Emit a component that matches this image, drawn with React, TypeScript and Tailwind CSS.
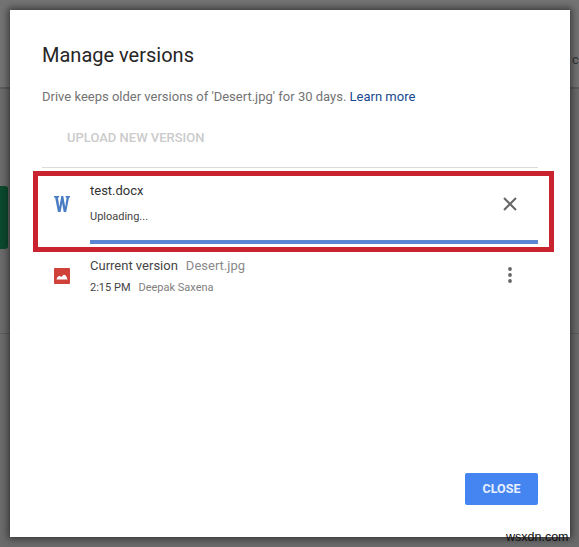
export default function App() {
  return (
    <div className="relative h-[547px] w-[579px] overflow-hidden bg-[#6b6b6b] pl-[10px] pt-[10px] font-['Roboto',sans-serif]">
      {/* dimmed page behind the dialog */}
      <div className="absolute left-0 top-0 h-[87px] w-full bg-[#737373]" />
      <div className="absolute left-0 top-[87px] h-[2px] w-full bg-[#5c5c5c]" />
      <div className="absolute left-0 top-[333px] h-[1px] w-full bg-[#5c5c5c]" />
      <div className="absolute left-[-6px] top-[186px] h-[63px] w-[14px] rounded-[3px] bg-[#0b4a2c]" />
      <span className="absolute left-[572px] top-[50px] text-[13px] text-[#333]">c</span>

      <div className="relative flex h-[527px] w-[560px] flex-col bg-white pl-[32px] pr-[32px] shadow-[0_0_7px_2px_rgba(0,0,0,0.5)]">
        <h1 className="mt-[31px] text-[20px] font-normal leading-[28px] text-[#262626]">Manage versions</h1>
        <p className="mt-[19px] text-[13px] leading-[18px] text-[#737373]">
          Drive keeps older versions of 'Desert.jpg' for 30 days.{" "}
          <span className="text-[#15478f]">Learn more</span>
        </p>
        <div className="mt-[23px] pl-[25px] text-[13px] font-medium leading-[18px] text-[#cbcbcb]">UPLOAD NEW VERSION</div>
        <div className="mt-[20px] h-px w-[496px] bg-[#dcdcdc]" />

        {/* highlighted row */}
        <div className="relative ml-[-9px] mt-[3px] flex h-[81px] w-[521px] border-[5px] border-[#c8232f] pl-[16px]">
          <div className="w-[36px] shrink-0 pt-[19px]">
            <svg width="16" height="18" viewBox="0 0 16 18" fill="#4a7cc4">
              <path d="M0 1h5.2v1.6H3.9L5.4 12 7.3 1h2l1.9 11L12.6 2.6h-1V1H16v1.6h-1L12.2 17H9.7L8.2 8.2 6.6 17H4L1.1 2.6H0z" />
            </svg>
          </div>
          <div className="flex-1">
            <div className="mt-[6px] text-[13px] leading-[18px] text-[#333]">test.docx</div>
            <div className="mt-[9px] text-[11px] leading-[16px] text-[#444]">Uploading...</div>
          </div>
          <svg className="absolute left-[463px] top-[19px]" width="18" height="18" viewBox="0 0 18 18" fill="none" stroke="#666" strokeWidth="2">
            <path d="M3 3l12 12M15 3L3 15" />
          </svg>
          <div className="absolute bottom-[3px] left-[52px] h-[4px] w-[448px] bg-[#5b86d1]" />
        </div>

        {/* current version row */}
        <div className="flex">
          <div className="w-[48px] shrink-0 pl-[12px] pt-[16px]">
            <svg width="16" height="16" viewBox="0 0 16 16">
              <rect width="16" height="16" rx="1" fill="#d0413a" />
              <path d="M2.5 11.5c.5-2 1.5-3.5 3-3.5 1 0 1.3.8 2 .8.8 0 1.2-2 2.7-2 1.600 0 2.800 2.500 3.300 4.700z" fill="#fff" />
            </svg>
          </div>
          <div className="flex-1">
            <div className="mt-[5px] text-[13px] leading-[18px] text-[#444]">
              Current version<span className="ml-[8px] text-[#8a8a8a]">Desert.jpg</span>
            </div>
            <div className="mt-[5px] text-[11px] leading-[16px] text-[#444]">
              2:15 PM<span className="ml-[8px] text-[#808080]">Deepak Saxena</span>
            </div>
          </div>
          <svg className="mr-[26px] mt-[14px]" width="4" height="18" viewBox="0 0 4 18" fill="#666">
            <circle cx="2" cy="3" r="1.9" /><circle cx="2" cy="9" r="1.9" /><circle cx="2" cy="15" r="1.9" />
          </svg>
        </div>

        <div className="mt-auto mb-[32px] flex justify-end">
          <button className="h-[32px] w-[73px] rounded-[2px] bg-[#4585f2] text-[12.5px] font-bold text-[#e8f0fe]">CLOSE</button>
        </div>
      </div>

      <span className="absolute left-[506px] top-[529px] font-['Liberation_Sans',sans-serif] text-[12.5px] leading-[16px] text-[#111]">wsxdn.com</span>
    </div>
  );
}
